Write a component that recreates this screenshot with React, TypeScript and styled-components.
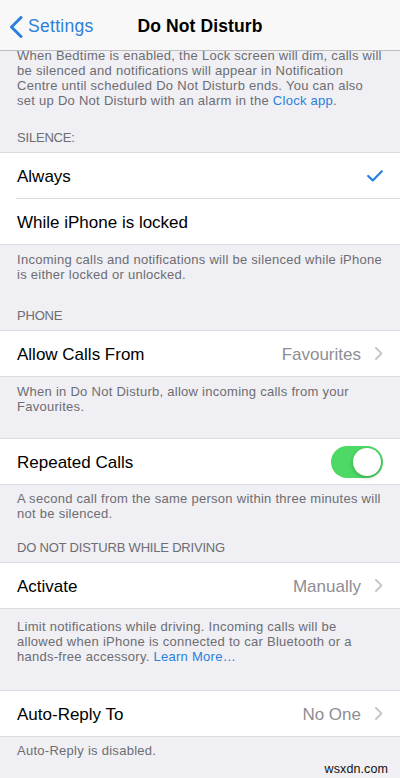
import React from "react";
import styled, { createGlobalStyle } from "styled-components";

const GlobalStyle = createGlobalStyle`
  html, body {
    margin: 0;
    padding: 0;
    background: #efeff4;
  }
  body {
    font-family: "Liberation Sans", Arial, sans-serif;
    -webkit-font-smoothing: antialiased;
  }
  * { box-sizing: border-box; }
`;

const Screen = styled.div`
  position: relative;
  width: 400px;
  height: 778px;
  overflow: hidden;
  background: #efeff4;
  display: flex;
  flex-direction: column;
`;

const NavBar = styled.header`
  position: relative;
  z-index: 2;
  flex: 0 0 51px;
  height: 51px;
  padding-top: 3px;
  background: #f8f8f8;
  border-bottom: 1px solid #bdbdc1;
  display: grid;
  grid-template-columns: 1fr auto 1fr;
  align-items: center;
`;

const BackButton = styled.div`
  display: flex;
  align-items: center;
  gap: 5px;
  padding-left: 9px;
  color: #2b7fdc;
  font-size: 17.5px;
  letter-spacing: 0.3px;
`;

const Title = styled.h1`
  margin: 0;
  font-size: 17.5px;
  font-weight: 700;
  color: #000;
  letter-spacing: 0.1px;
`;

const Content = styled.main`
  display: flex;
  flex-direction: column;
`;

const Footer = styled.p<{ $pt: number; $mt?: number }>`
  margin: ${(p) => p.$mt ?? 0}px 0 0;
  padding: ${(p) => p.$pt}px 8px 0 17px;
  font-size: 13px;
  line-height: 15px;
  letter-spacing: 0.27px;
  color: #6d6d72;
  white-space: nowrap;
  position: relative;
  z-index: 1;
`;

const Link = styled.span`
  color: #2b7fdc;
`;

const Header = styled.div<{ $pt: number }>`
  padding: ${(p) => p.$pt}px 16px 7px 17px;
  font-size: 13px;
  line-height: 15px;
  letter-spacing: -0.2px;
  color: #6d6d72;
  text-transform: uppercase;
`;

const Group = styled.section<{ $mt?: number }>`
  margin-top: ${(p) => p.$mt ?? 0}px;
  background: #fff;
  border-top: 1px solid #dcdce0;
  border-bottom: 1px solid #dcdce0;
`;

const Row = styled.div`
  height: 45px;
  padding: 3px 17px 0 17px;
  display: flex;
  align-items: center;
  font-size: 17px;
  color: #000;
`;

const Label = styled.span`
  flex: 1;
`;

const Value = styled.span`
  color: #8e8e93;
  margin-right: 14px;
`;

const Separator = styled.div`
  height: 1px;
  margin-left: 16px;
  background: #dcdce0;
`;

const Toggle = styled.div<{ $on: boolean }>`
  position: relative;
  width: 52px;
  height: 32px;
  margin-top: -3px;
  border-radius: 16px;
  background: ${(p) => (p.$on ? "#4cd964" : "#e5e5ea")};
`;

const Knob = styled.div<{ $on: boolean }>`
  position: absolute;
  top: 2px;
  left: ${(p) => (p.$on ? "22px" : "2px")};
  width: 28px;
  height: 28px;
  border-radius: 50%;
  background: #fff;
  box-shadow: 0 2px 4px rgba(0, 0, 0, 0.2), 0 0 1px rgba(0, 0, 0, 0.15);
`;

const Watermark = styled.div`
  position: absolute;
  right: 12px;
  bottom: 2px;
  font-size: 12.5px;
  color: #111;
  letter-spacing: 0.1px;
`;

const BackChevron = () => (
  <svg width="14" height="22" viewBox="0 0 14 22">
    <path
      d="M12 1.5 L2.5 11 L12 20.5"
      fill="none"
      stroke="#2b7fdc"
      strokeWidth="3"
      strokeLinecap="round"
      strokeLinejoin="round"
    />
  </svg>
);

const Chevron = () => (
  <svg width="8" height="13" viewBox="0 0 8 13" style={{ marginTop: -3 }}>
    <path
      d="M1 1 L6.5 6.5 L1 12"
      fill="none"
      stroke="#c7c7cc"
      strokeWidth="2"
      strokeLinecap="round"
      strokeLinejoin="round"
    />
  </svg>
);

const Check = () => (
  <svg width="16" height="12" viewBox="0 0 16 12" style={{ marginTop: -3 }}>
    <path
      d="M1.2 6 L5.8 10.4 L14.8 1.2"
      fill="none"
      stroke="#2b7fdc"
      strokeWidth="2.2"
      strokeLinecap="round"
      strokeLinejoin="round"
    />
  </svg>
);

export default function App() {
  return (
    <>
      <GlobalStyle />
      <Screen>
        <NavBar>
          <BackButton>
            <BackChevron />
            <span>Settings</span>
          </BackButton>
          <Title>Do Not Disturb</Title>
          <div />
        </NavBar>
        <Content>
          <Footer $pt={0} $mt={-3}>
            When Bedtime is enabled, the Lock screen will dim, calls will
            <br />
            be silenced and notifications will appear in Notification
            <br />
            Centre until scheduled Do Not Disturb ends. You can also
            <br />
            set up Do Not Disturb with an alarm in the <Link>Clock app</Link>.
          </Footer>

          <Header $pt={22}>Silence:</Header>
          <Group>
            <Row>
              <Label>Always</Label>
              <Check />
            </Row>
            <Separator />
            <Row>
              <Label>While iPhone is locked</Label>
            </Row>
          </Group>
          <Footer $pt={7}>
            Incoming calls and notifications will be silenced while iPhone
            <br />
            is either locked or unlocked.
          </Footer>

          <Header $pt={26}>Phone</Header>
          <Group>
            <Row>
              <Label>Allow Calls From</Label>
              <Value>Favourites</Value>
              <Chevron />
            </Row>
          </Group>
          <Footer $pt={7}>
            When in Do Not Disturb, allow incoming calls from your
            <br />
            Favourites.
          </Footer>

          <Group $mt={24}>
            <Row>
              <Label>Repeated Calls</Label>
              <Toggle $on>
                <Knob $on />
              </Toggle>
            </Row>
          </Group>
          <Footer $pt={6}>
            A second call from the same person within three minutes will
            <br />
            not be silenced.
          </Footer>

          <Header $pt={19}>Do Not Disturb While Driving</Header>
          <Group>
            <Row>
              <Label>Activate</Label>
              <Value>Manually</Value>
              <Chevron />
            </Row>
          </Group>
          <Footer $pt={10}>
            Limit notifications while driving. Incoming calls will be
            <br />
            allowed when iPhone is connected to car Bluetooth or a
            <br />
            hands-free accessory. <Link>Learn More…</Link>
          </Footer>

          <Group $mt={26}>
            <Row>
              <Label>Auto-Reply To</Label>
              <Value>No One</Value>
              <Chevron />
            </Row>
          </Group>
          <Footer $pt={6}>Auto-Reply is disabled.</Footer>
        </Content>
        <Watermark>wsxdn.com</Watermark>
      </Screen>
    </>
  );
}
